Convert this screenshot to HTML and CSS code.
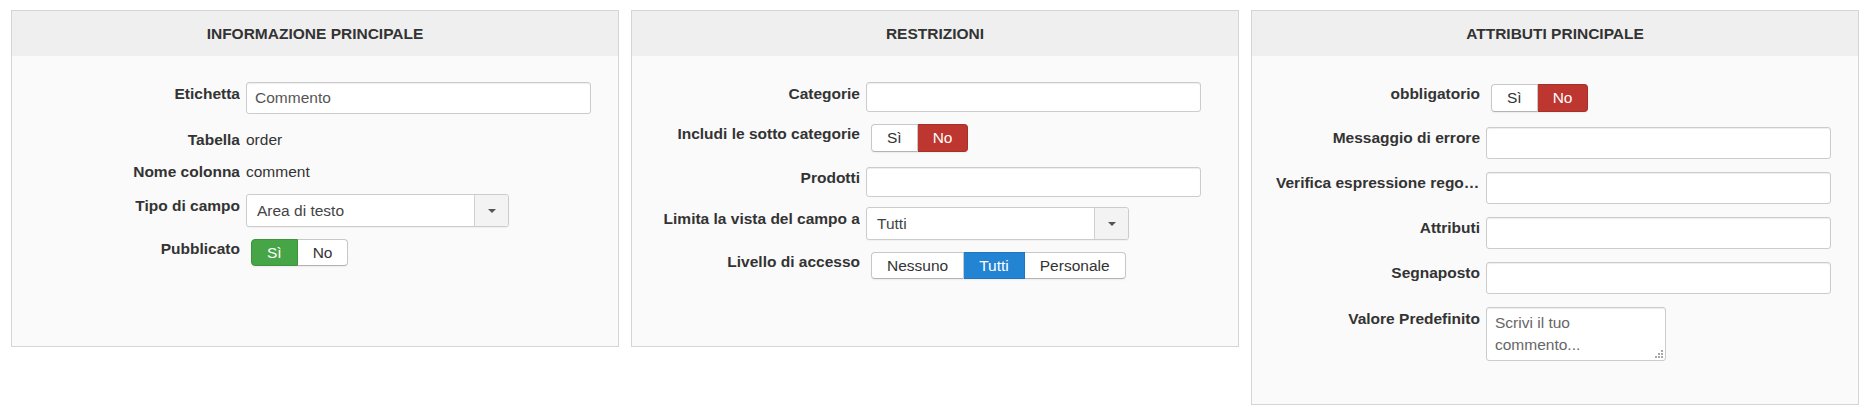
FILE: index.html
```
<!DOCTYPE html>
<html lang="it">
<head>
<meta charset="utf-8">
<title>Campo</title>
<link rel="stylesheet" href="styles.css">
</head>
<body>
<div class="page">
  <section class="panel panel-short">
    <h3 class="panel-title">INFORMAZIONE PRINCIPALE</h3>
    <div class="panel-body">
      <div class="row mb14">
        <div class="lbl">Etichetta</div>
        <input class="inp w345" type="text" value="Commento">
      </div>
      <div class="row mb8">
        <div class="lbl">Tabella</div>
        <div class="value">order</div>
      </div>
      <div class="row mb10">
        <div class="lbl">Nome colonna</div>
        <div class="value">comment</div>
      </div>
      <div class="row mb10">
        <div class="lbl">Tipo di campo</div>
        <div class="select"><span class="select-text">Area di testo</span><span class="select-arrow"><span class="caret"></span></span></div>
      </div>
      <div class="row">
        <div class="lbl">Pubblicato</div>
        <div class="toggle mt2 h27">
          <span class="seg seg-green">Sì</span><span class="seg">No</span>
        </div>
      </div>
    </div>
  </section>

  <section class="panel panel-short">
    <h3 class="panel-title">RESTRIZIONI</h3>
    <div class="panel-body">
      <div class="row mb10">
        <div class="lbl">Categorie</div>
        <input class="inp w335 h30" type="text">
      </div>
      <div class="row mb14">
        <div class="lbl">Includi le sotto categorie</div>
        <div class="toggle mt2 h28">
          <span class="seg">Sì</span><span class="seg seg-red">No</span>
        </div>
      </div>
      <div class="row mb10">
        <div class="lbl">Prodotti</div>
        <input class="inp w335 h30 mt1" type="text">
      </div>
      <div class="row mb10">
        <div class="lbl">Limita la vista del campo a</div>
        <div class="select"><span class="select-text">Tutti</span><span class="select-arrow"><span class="caret"></span></span></div>
      </div>
      <div class="row">
        <div class="lbl">Livello di accesso</div>
        <div class="toggle mt2 h27">
          <span class="seg">Nessuno</span><span class="seg seg-blue">Tutti</span><span class="seg">Personale</span>
        </div>
      </div>
    </div>
  </section>

  <section class="panel">
    <h3 class="panel-title">ATTRIBUTI PRINCIPALE</h3>
    <div class="panel-body body-pad">
      <div class="row mb14">
        <div class="lbl">obbligatorio</div>
        <div class="toggle mt2 h28">
          <span class="seg">Sì</span><span class="seg seg-red">No</span>
        </div>
      </div>
      <div class="row mb12">
        <div class="lbl">Messaggio di errore</div>
        <input class="inp w345 mt1" type="text">
      </div>
      <div class="row mb12">
        <div class="lbl">Verifica espressione regolare</div>
        <input class="inp w345 mt1" type="text">
      </div>
      <div class="row mb12">
        <div class="lbl">Attributi</div>
        <input class="inp w345 mt1" type="text">
      </div>
      <div class="row mb13">
        <div class="lbl">Segnaposto</div>
        <input class="inp w345 mt1" type="text">
      </div>
      <div class="row">
        <div class="lbl">Valore Predefinito</div>
        <div class="area-wrap">
          <textarea class="area" placeholder="Scrivi il tuo commento..."></textarea>
          <svg class="grip" width="8" height="8" viewBox="0 0 8 8" aria-hidden="true">
            <rect x="6" y="0" width="2" height="2"/>
            <rect x="3" y="3" width="2" height="2"/>
            <rect x="6" y="3" width="2" height="2"/>
            <rect x="0" y="6" width="2" height="2"/>
            <rect x="3" y="6" width="2" height="2"/>
            <rect x="6" y="6" width="2" height="2"/>
          </svg>
        </div>
      </div>
    </div>
  </section>
</div>
</body>
</html>
```
FILE: styles.css
```
html, body {
  margin: 0;
  background: #ffffff;
}

body {
  font-family: "Liberation Sans", Arial, Helvetica, sans-serif;
  font-size: 15.5px;
  color: #333333;
}

.page {
  display: flex;
  align-items: flex-start;
  gap: 12px;
  padding: 10px 0 0 11px;
}

.panel {
  width: 608px;
  box-sizing: border-box;
  border: 1px solid #d5d5d5;
  background: #fafafa;
  flex: none;
}

.panel-short {
  min-height: 337px;
}

.panel-title {
  margin: 0;
  height: 45px;
  line-height: 45px;
  background: #efefef;
  text-align: center;
  font-size: 15.5px;
  font-weight: bold;
  color: #333333;
}

.panel-body {
  padding: 26px 0 0 0;
}

.body-pad {
  padding-bottom: 43px;
}

.row {
  display: flex;
  align-items: flex-start;
}

.lbl {
  flex: none;
  width: 204px;
  margin-left: 24px;
  margin-right: 6px;
  text-align: right;
  font-weight: bold;
  line-height: 24px;
  white-space: nowrap;
  overflow: hidden;
  text-overflow: ellipsis;
  color: #333333;
}

.value {
  line-height: 24px;
  color: #333333;
}

.inp {
  display: block;
  height: 32px;
  box-sizing: border-box;
  border: 1px solid #cccccc;
  border-radius: 3px;
  background: #ffffff;
  padding: 0 8px;
  margin: 0;
  font: inherit;
  color: #555555;
  box-shadow: inset 0 1px 1px rgba(0, 0, 0, 0.075);
  outline: none;
}

.w345 { width: 345px; }
.w335 { width: 335px; }
.h30 { height: 30px; }

.select {
  display: flex;
  width: 263px;
  height: 33px;
  box-sizing: border-box;
  border: 1px solid #cccccc;
  border-radius: 3px;
  background: #ffffff;
  box-shadow: 0 1px 1px rgba(0, 0, 0, 0.04);
}

.select-text {
  flex: 1;
  padding-left: 10px;
  line-height: 31px;
  color: #444444;
}

.select-arrow {
  width: 33px;
  border-left: 1px solid #d0d0d0;
  background: #f3f3f3;
  border-radius: 0 3px 3px 0;
  display: flex;
  align-items: center;
  justify-content: center;
}

.caret {
  width: 0;
  height: 0;
  border-left: 4px solid transparent;
  border-right: 4px solid transparent;
  border-top: 4px solid #555555;
}

.toggle {
  display: flex;
  margin-left: 5px;
  border-radius: 4px;
  box-shadow: 0 1px 2px rgba(0, 0, 0, 0.06);
}

.h27 { height: 27px; }
.h28 { height: 28px; }

.seg {
  box-sizing: border-box;
  height: 100%;
  padding: 0 15px;
  display: flex;
  align-items: center;
  border: 1px solid #c8c8c8;
  border-bottom-color: #b3b3b3;
  background: #ffffff;
  color: #333333;
}

.seg + .seg {
  border-left: none;
}

.seg:first-child {
  border-radius: 4px 0 0 4px;
}

.seg:last-child {
  border-radius: 0 4px 4px 0;
}

.seg-green {
  background: #46a546;
  border-color: #3f933f;
  color: #ffffff;
}

.seg-red {
  background: #bd362f;
  border-color: #a5302a;
  color: #ffffff;
}

.seg-blue {
  background: #2384d3;
  border-color: #1f76bd;
  color: #ffffff;
}

.area-wrap {
  position: relative;
  width: 180px;
  height: 54px;
}

.area {
  display: block;
  width: 180px;
  height: 54px;
  box-sizing: border-box;
  border: 1px solid #cccccc;
  border-radius: 3px;
  background: #ffffff;
  padding: 4px 14px 4px 8px;
  margin: 0;
  font: inherit;
  line-height: 22px;
  color: #555555;
  box-shadow: inset 0 1px 1px rgba(0, 0, 0, 0.075);
  outline: none;
  overflow: hidden;
  resize: none;
}

.area::placeholder {
  color: #666666;
  opacity: 1;
}

.grip {
  position: absolute;
  right: 3px;
  bottom: 3px;
  fill: #a8a8a8;
}

/* spacing utilities (kept last so they win over component margins) */
.mb8 { margin-bottom: 8px; }
.mb10 { margin-bottom: 10px; }
.mb12 { margin-bottom: 12px; }
.mb13 { margin-bottom: 13px; }
.mb14 { margin-bottom: 14px; }
.mt1 { margin-top: 1px; }
.mt2 { margin-top: 2px; }
```
